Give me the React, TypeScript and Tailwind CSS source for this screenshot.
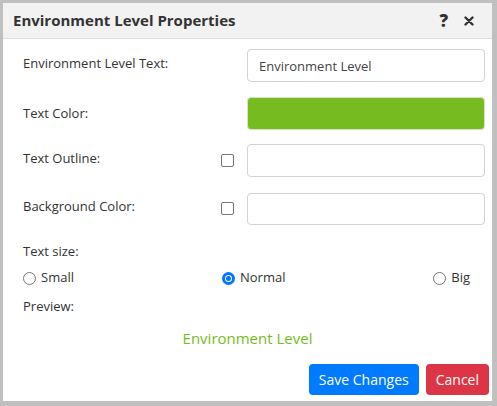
import { useState } from "react"

const font = { fontFamily: '"Open Sans", "Noto Sans", sans-serif' }

function Checkbox() {
  return <span className="block w-[13px] h-[13px] rounded-[2px] border border-[#767676] bg-white" />
}

function Radio({ checked }: { checked?: boolean }) {
  return checked ? (
    <span className="flex items-center justify-center w-[13px] h-[13px] rounded-full bg-[#0075ff]">
      <span className="block w-[7px] h-[7px] rounded-full bg-white">
        <span className="block w-[5px] h-[5px] m-[1px] rounded-full bg-[#0075ff]" />
      </span>
    </span>
  ) : (
    <span className="block w-[13px] h-[13px] rounded-full border border-[#767676] bg-white" />
  )
}

export default function App() {
  const [size] = useState("normal")
  return (
    <div className="w-[497px] h-[406px] bg-[#c0c0c0] pt-[3px] pl-[3px]" style={font}>
      <div className="w-[489px] h-[398px] bg-white flex flex-col">
        {/* Header */}
        <div className="h-[36px] bg-[#f2f2f2] border-b border-[#dedede] flex items-center pl-[10px] pr-[18px]">
          <h1 className="text-[15px] font-bold text-[#333] flex-1">Environment Level Properties</h1>
          <span className="text-[17px] font-extrabold text-[#333] leading-none mr-[16px]">?</span>
          <svg width="10" height="10" viewBox="0 0 10 10">
            <path d="M1.5 1.5 L8.5 8.5 M8.5 1.5 L1.5 8.5" stroke="#333" strokeWidth="2.4" strokeLinecap="round" />
          </svg>
        </div>

        {/* Body */}
        <div className="flex flex-col pl-[20px] pr-[7px] pt-[10px] text-[13px] text-[#333]">
          <div className="flex items-center h-[33px]">
            <span className="w-[224px] -mt-[4px]">Environment Level Text:</span>
            <input
              readOnly
              value="Environment Level"
              className="w-[238px] h-[33px] border border-[#ced4da] rounded-[4px] px-[11px] text-[13px] text-[#444] outline-none"
            />
          </div>
          <div className="flex items-center h-[33px] mt-[15px]">
            <span className="w-[224px]">Text Color:</span>
            <div className="w-[238px] h-[33px] rounded-[4px] bg-[#76bc21] border border-[#d6e4c4]" />
          </div>
          <div className="flex items-center h-[33px] mt-[14px]">
            <span className="w-[198px] -mt-[4px]">Text Outline:</span>
            <span className="w-[26px]">
              <Checkbox />
            </span>
            <div className="w-[238px] h-[33px] border border-[#ced4da] rounded-[4px]" />
          </div>
          <div className="flex items-center h-[33px] mt-[15px]">
            <span className="w-[198px] -mt-[4px]">Background Color:</span>
            <span className="w-[26px]">
              <Checkbox />
            </span>
            <div className="w-[238px] h-[32px] border border-[#ced4da] rounded-[4px]" />
          </div>
          <div className="mt-[17px] h-[20px] flex items-center">Text size:</div>
          <div className="flex items-center h-[20px] mt-[6px] pr-[15px]">
            <label className="flex items-center gap-[5px] w-[199px]">
              <Radio checked={size === "small"} />
              <span>Small</span>
            </label>
            <label className="flex items-center gap-[5px]">
              <Radio checked={size === "normal"} />
              <span>Normal</span>
            </label>
            <label className="flex items-center gap-[5px] ml-auto">
              <Radio checked={size === "big"} />
              <span>Big</span>
            </label>
          </div>
          <div className="mt-[9px] h-[20px] flex items-center">Preview:</div>
          <div className="mt-[10px] h-[22px] flex items-center justify-center text-[15px] text-[#76bc21] pr-[13px]">
            Environment Level
          </div>
          <div className="flex justify-end gap-[7px] mt-[15px] -mr-[4px]">
            <button className="h-[31px] px-[10px] rounded-[4px] bg-[#007bff] text-white text-[14px]">Save Changes</button>
            <button className="h-[31px] px-[10px] rounded-[4px] bg-[#dc3545] text-white text-[14px]">Cancel</button>
          </div>
        </div>
      </div>
    </div>
  )
}
